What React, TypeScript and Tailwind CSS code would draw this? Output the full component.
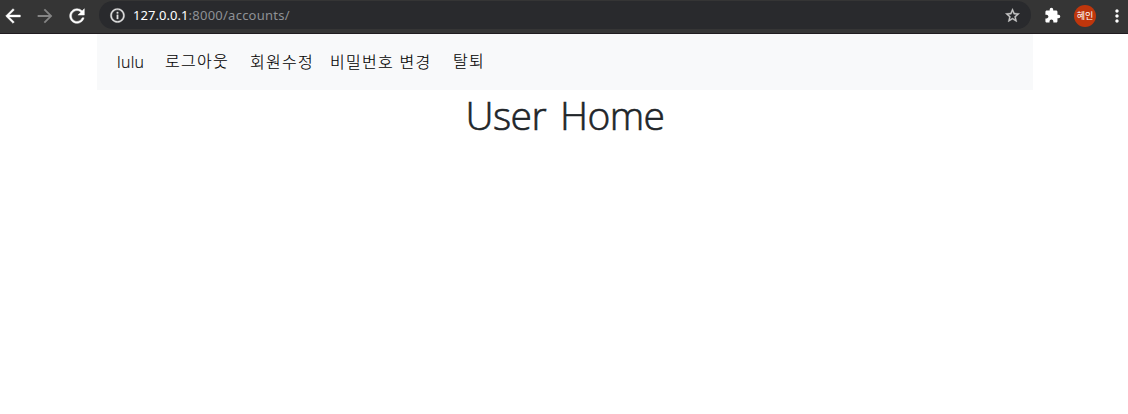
import {
  MdArrowBack,
  MdArrowForward,
  MdExtension,
  MdInfoOutline,
  MdMoreVert,
  MdRefresh,
  MdStarBorder,
} from 'react-icons/md';

function BrowserBar() {
  return (
    <header className="flex h-[34px] items-start border-b border-[#201c20] bg-[#353535] font-['Noto_Sans','Noto_Sans_CJK_KR',sans-serif] text-white">
      <div className="flex h-[31px] w-[99px] shrink-0 items-center gap-[10px] pl-[2px]">
        <MdArrowBack size={22} className="[&_path:last-child]:stroke-current [&_path:last-child]:stroke-[0.5]" />
        <MdArrowForward size={22} className="text-[#858585]" />
        <MdRefresh size={22} className="[&_path:last-child]:stroke-current [&_path:last-child]:stroke-[0.5]" />
      </div>
      <div className="mt-px flex h-7 w-[932px] shrink-0 items-center rounded-full bg-[#292a2d] pl-[10px] pr-[10px]">
        <MdInfoOutline size={17} className="shrink-0 text-[#e0e0e0] [&_path:last-child]:stroke-current [&_path:last-child]:stroke-[0.5]" />
        <span className="ml-[7px] whitespace-nowrap text-[13px] leading-7 tracking-[0.25px] text-[#8e9195]">
          <span className="tracking-[0.05px] text-white">127.0.0.1</span>:8000/accounts/
        </span>
        <MdStarBorder size={17} className="ml-auto shrink-0 text-[#c8c8c8] [&_path:last-child]:stroke-current [&_path:last-child]:stroke-[0.5]" />
      </div>
      <div className="flex h-[31px] items-center">
        <MdExtension size={17} className="ml-[13px] shrink-0" />
        <div className="ml-[13px] flex size-[22px] shrink-0 items-center justify-center rounded-full bg-[#bf360c] text-[9px] leading-none">
          혜인
        </div>
        <MdMoreVert size={20} className="ml-[11px] shrink-0" />
      </div>
    </header>
  );
}

function NavBar() {
  return (
    <nav className="flex h-14 items-center whitespace-nowrap bg-[#f8f9fa] pl-[20px] text-base font-light tracking-[1.28px] text-black [-webkit-text-stroke:0.15px_currentColor]">
      <a className="w-[48px] tracking-[0.3px]">lulu</a>
      <button className="w-[85px] pb-0.5 text-left">로그아웃</button>
      <a className="w-[80px]">회원수정</a>
      <a className="w-[123px]">비밀번호 변경</a>
      <button className="pb-0.5">탈퇴</button>
    </nav>
  );
}

export default function App() {
  return (
    <div className="min-h-screen bg-white font-['Open_Sans','Noto_Sans_CJK_KR',sans-serif]">
      <BrowserBar />
      <main className="ml-[97px] w-[936px]">
        <NavBar />
        <h1 className="text-center text-[39px] font-light leading-[50px] tracking-[-0.6px] text-[#212529] [-webkit-text-stroke:0.6px_currentColor] [word-spacing:4.5px]">User Home</h1>
      </main>
    </div>
  );
}
